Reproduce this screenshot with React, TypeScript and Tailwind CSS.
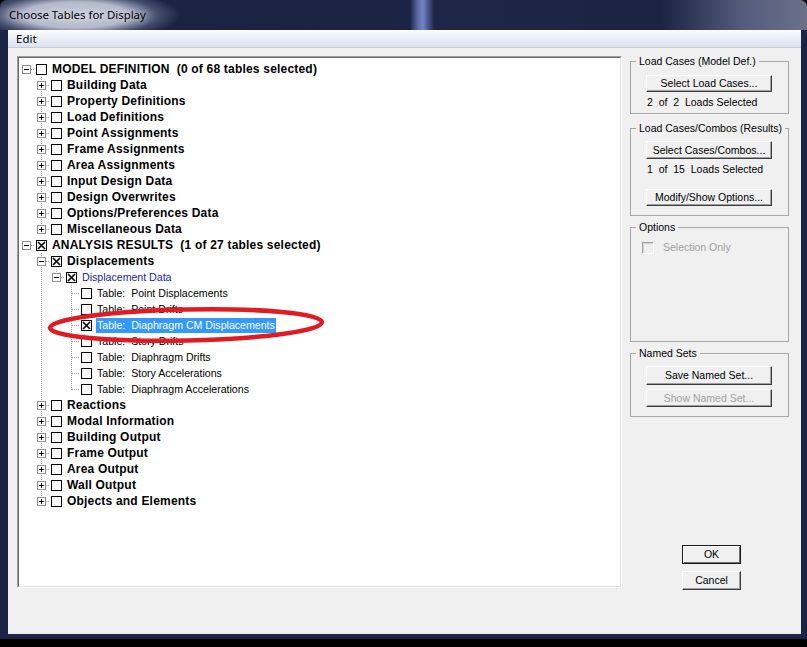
import React from 'react';

type Vert = 'full' | 'top' | 'none';
type Row = {
  level: number;
  label: string;
  kind: 'bold' | 'blue' | 'normal';
  exp?: 'plus' | 'minus';
  checked?: boolean;
  selected?: boolean;
  guides: number[];
  vert: Vert;
};

const modelChildren = [
  'Building Data',
  'Property Definitions',
  'Load Definitions',
  'Point Assignments',
  'Frame Assignments',
  'Area Assignments',
  'Input Design Data',
  'Design Overwrites',
  'Options/Preferences Data',
  'Miscellaneous Data',
];

const tables = [
  'Table:  Point Displacements',
  'Table:  Point Drifts',
  'Table:  Diaphragm CM Displacements',
  'Table:  Story Drifts',
  'Table:  Diaphragm Drifts',
  'Table:  Story Accelerations',
  'Table:  Diaphragm Accelerations',
];

const resultChildren = [
  'Reactions',
  'Modal Information',
  'Building Output',
  'Frame Output',
  'Area Output',
  'Wall Output',
  'Objects and Elements',
];

const rows: Row[] = [
  { level: 0, label: 'MODEL DEFINITION  (0 of 68 tables selected)', kind: 'bold', exp: 'minus', guides: [], vert: 'none' },
  ...modelChildren.map((l, i) => ({
    level: 1,
    label: l,
    kind: 'bold' as const,
    exp: 'plus' as const,
    guides: [],
    vert: (i === modelChildren.length - 1 ? 'top' : 'full') as Vert,
  })),
  { level: 0, label: 'ANALYSIS RESULTS  (1 of 27 tables selected)', kind: 'bold', exp: 'minus', checked: true, guides: [], vert: 'none' },
  { level: 1, label: 'Displacements', kind: 'bold', exp: 'minus', checked: true, guides: [], vert: 'full' },
  { level: 2, label: 'Displacement Data', kind: 'blue', exp: 'minus', checked: true, guides: [1], vert: 'top' },
  ...tables.map((l, i) => ({
    level: 3,
    label: l,
    kind: 'normal' as const,
    checked: i === 2,
    selected: i === 2,
    guides: [1],
    vert: (i === tables.length - 1 ? 'top' : 'full') as Vert,
  })),
  ...resultChildren.map((l, i) => ({
    level: 1,
    label: l,
    kind: 'bold' as const,
    exp: 'plus' as const,
    guides: [],
    vert: (i === resultChildren.length - 1 ? 'top' : 'full') as Vert,
  })),
];

function Connector({ vert, exp }: { vert: Vert; exp?: 'plus' | 'minus' }) {
  return (
    <svg width="15" height="16" className="shrink-0 block" shapeRendering="crispEdges">
      {vert !== 'none' && (
        <line x1="7.5" y1="0" x2="7.5" y2={vert === 'full' ? 16 : 8.5} stroke="#a0a0a0" strokeDasharray="1 1" />
      )}
      <line x1="8" y1="8.5" x2="15" y2="8.5" stroke="#a0a0a0" strokeDasharray="1 1" />
      {exp && (
        <g>
          <rect x="3.5" y="4.5" width="8" height="8" fill="#ffffff" stroke="#919191" />
          <line x1="5" y1="8.5" x2="10" y2="8.5" stroke="#000000" />
          {exp === 'plus' && <line x1="7.5" y1="6" x2="7.5" y2="11" stroke="#000000" />}
        </g>
      )}
    </svg>
  );
}

function Guide() {
  return (
    <svg width="15" height="16" className="shrink-0 block" shapeRendering="crispEdges">
      <line x1="7.5" y1="0" x2="7.5" y2="16" stroke="#a0a0a0" strokeDasharray="1 1" />
    </svg>
  );
}

function TreeCheck({ checked }: { checked?: boolean }) {
  return (
    <span className="ml-[2px] w-[11px] h-[11px] border border-black bg-white shrink-0 flex items-center justify-center">
      {checked && (
        <svg width="9" height="9" viewBox="0 0 9 9" className="block">
          <path d="M1 1 L8 8 M8 1 L1 8" stroke="#000" strokeWidth="1.6" />
        </svg>
      )}
    </span>
  );
}

function TreeRow({ row }: { row: Row }) {
  const cells = [];
  for (let i = 0; i < row.level; i++) {
    cells.push(row.guides.includes(i) ? <Guide key={i} /> : <span key={i} className="w-[15px] shrink-0" />);
  }
  const textCls =
    row.kind === 'bold'
      ? 'font-bold text-[12px] tracking-[0.2px] text-black'
      : row.kind === 'blue'
      ? 'text-[10.6px] text-[#1a1aa6]'
      : 'text-[10.6px] text-black';
  return (
    <div className="flex items-center h-[16px]">
      {cells}
      <Connector vert={row.vert} exp={row.exp} />
      <TreeCheck checked={row.checked} />
      <span
        className={`ml-[4px] whitespace-pre leading-[15px] px-[1px] ${textCls} ${
          row.selected ? 'bg-[#3399ff] text-white' : ''
        }`}
      >
        {row.label}
      </span>
    </div>
  );
}

function WinButton({
  children,
  disabled,
  def,
  className = '',
}: {
  children: React.ReactNode;
  disabled?: boolean;
  def?: boolean;
  className?: string;
}) {
  return (
    <div
      className={`flex items-center justify-center bg-[#f0f0f0] text-[10.5px] leading-none ${
        def
          ? 'border border-[#1a1a1a] shadow-[inset_1px_1px_#ffffff,inset_-1px_-1px_#6f6f6f]'
          : 'border border-t-white border-l-white border-b-[#3c3c3c] border-r-[#3c3c3c] shadow-[inset_-1px_-1px_#a0a0a0]'
      } ${disabled ? 'text-[#a0a0a0]' : 'text-black'} ${className}`}
    >
      {children}
    </div>
  );
}

function Group({ title, height, className = '', children }: { title: string; height: number; className?: string; children?: React.ReactNode }) {
  return (
    <fieldset className={`border border-[#a8a8a8] p-0 m-0 min-w-0 ${className}`} style={{ height }}>
      <legend className="ml-[5px] px-[3px] leading-[13px] text-[10.5px] text-black">{title}</legend>
      {children}
    </fieldset>
  );
}

export default function App() {
  return (
    <div className="w-[807px] h-[647px] bg-black overflow-hidden font-['Liberation_Sans',Arial,sans-serif]">
      <div className="w-[807px] h-[639px] flex flex-col rounded-t-[7px] bg-[#1c2445] overflow-hidden">
        {/* title bar */}
        <div className="h-[30px] shrink-0 flex items-center pl-[9px] bg-[radial-gradient(ellipse_105px_26px_at_76px_15px,rgba(208,212,226,0.97)_0%,rgba(196,201,218,0.9)_50%,rgba(120,128,160,0.45)_78%,rgba(28,36,69,0)_100%),linear-gradient(to_right,#1b2344_0%,#1c2445_50.8%,#5d6ca8_51.8%,#7585c4_52.4%,#4d5a92_53%,#1d2647_53.8%,#1c2445_82%,#545b7c_92%,#6c7189_100%)]">
          <span className="font-['Noto_Sans',sans-serif] text-[11.4px] text-black [text-shadow:0_0_6px_rgba(255,255,255,0.8)]">
            Choose Tables for Display
          </span>
        </div>
        {/* client */}
        <div className="flex-1 ml-[8px] mr-[6px] mb-[5px] bg-[#f0f0f0] flex flex-col">
          <div className="h-[18px] shrink-0 flex items-center pl-[8px] bg-[linear-gradient(to_bottom,#fbfcfe,#e7ecf5_60%,#dbe2f0)] border-b border-[#c5cbd8]">
            <span className="font-['Noto_Sans',sans-serif] text-[11.5px] text-black leading-none">Edit</span>
          </div>
          <div className="flex items-start pl-[9px]">
            {/* tree */}
            <div className="mt-[8px] w-[605px] h-[532px] border border-t-[#a0a0a0] border-l-[#a0a0a0] border-b-white border-r-white">
              <div className="relative w-full h-full bg-white border border-t-[#696969] border-l-[#696969] border-b-[#e3e3e3] border-r-[#e3e3e3] pt-[3px]">
                {rows.map((r, i) => (
                  <TreeRow key={i} row={r} />
                ))}
                <svg className="absolute left-0 top-0 pointer-events-none" width="600" height="527">
                  <ellipse
                    cx="167"
                    cy="267"
                    rx="136"
                    ry="15.5"
                    fill="none"
                    stroke="#e01b24"
                    strokeWidth="4.5"
                    transform="rotate(-1.2 167 267)"
                  />
                </svg>
              </div>
            </div>
            {/* right column */}
            <div className="ml-[8px] mt-[7px] w-[159px] flex flex-col">
              <Group title="Load Cases (Model Def.)" height={59}>
                <div className="pl-[15px] pt-[7px]">
                  <WinButton className="w-[126px] h-[17px]">Select Load Cases...</WinButton>
                  <div className="mt-[4px] pl-[1px] text-[10.5px] leading-[13px] whitespace-pre">2  of  2  Loads Selected</div>
                </div>
              </Group>
              <Group title="Load Cases/Combos (Results)" height={94} className="mt-[8px]">
                <div className="pl-[15px] pt-[6px]">
                  <WinButton className="w-[126px] h-[18px]">Select Cases/Combos...</WinButton>
                  <div className="mt-[4px] pl-[1px] text-[10.5px] leading-[13px] whitespace-pre">1  of  15  Loads Selected</div>
                  <WinButton className="mt-[13px] w-[126px] h-[17px]">Modify/Show Options...</WinButton>
                </div>
              </Group>
              <Group title="Options" height={121} className="mt-[5px]">
                <div className="pl-[11px] pt-[7px] flex items-center">
                  <span className="w-[12px] h-[12px] border border-t-[#a0a0a0] border-l-[#a0a0a0] border-b-white border-r-white bg-[#f0f0f0] shadow-[inset_1px_1px_#d4d4d4]" />
                  <span className="ml-[9px] text-[10.5px] leading-[13px] text-[#a0a0a0]">Selection Only</span>
                </div>
              </Group>
              <Group title="Named Sets" height={70} className="mt-[5px]">
                <div className="pl-[15px] pt-[6px]">
                  <WinButton className="w-[126px] h-[19px]">Save Named Set...</WinButton>
                  <WinButton disabled className="mt-[4px] w-[126px] h-[18px]">Show Named Set...</WinButton>
                </div>
              </Group>
              <WinButton def className="ml-[52px] mt-[128px] w-[59px] h-[19px]">OK</WinButton>
              <WinButton className="ml-[52px] mt-[7px] w-[59px] h-[19px]">Cancel</WinButton>
            </div>
          </div>
        </div>
      </div>
    </div>
  );
}
